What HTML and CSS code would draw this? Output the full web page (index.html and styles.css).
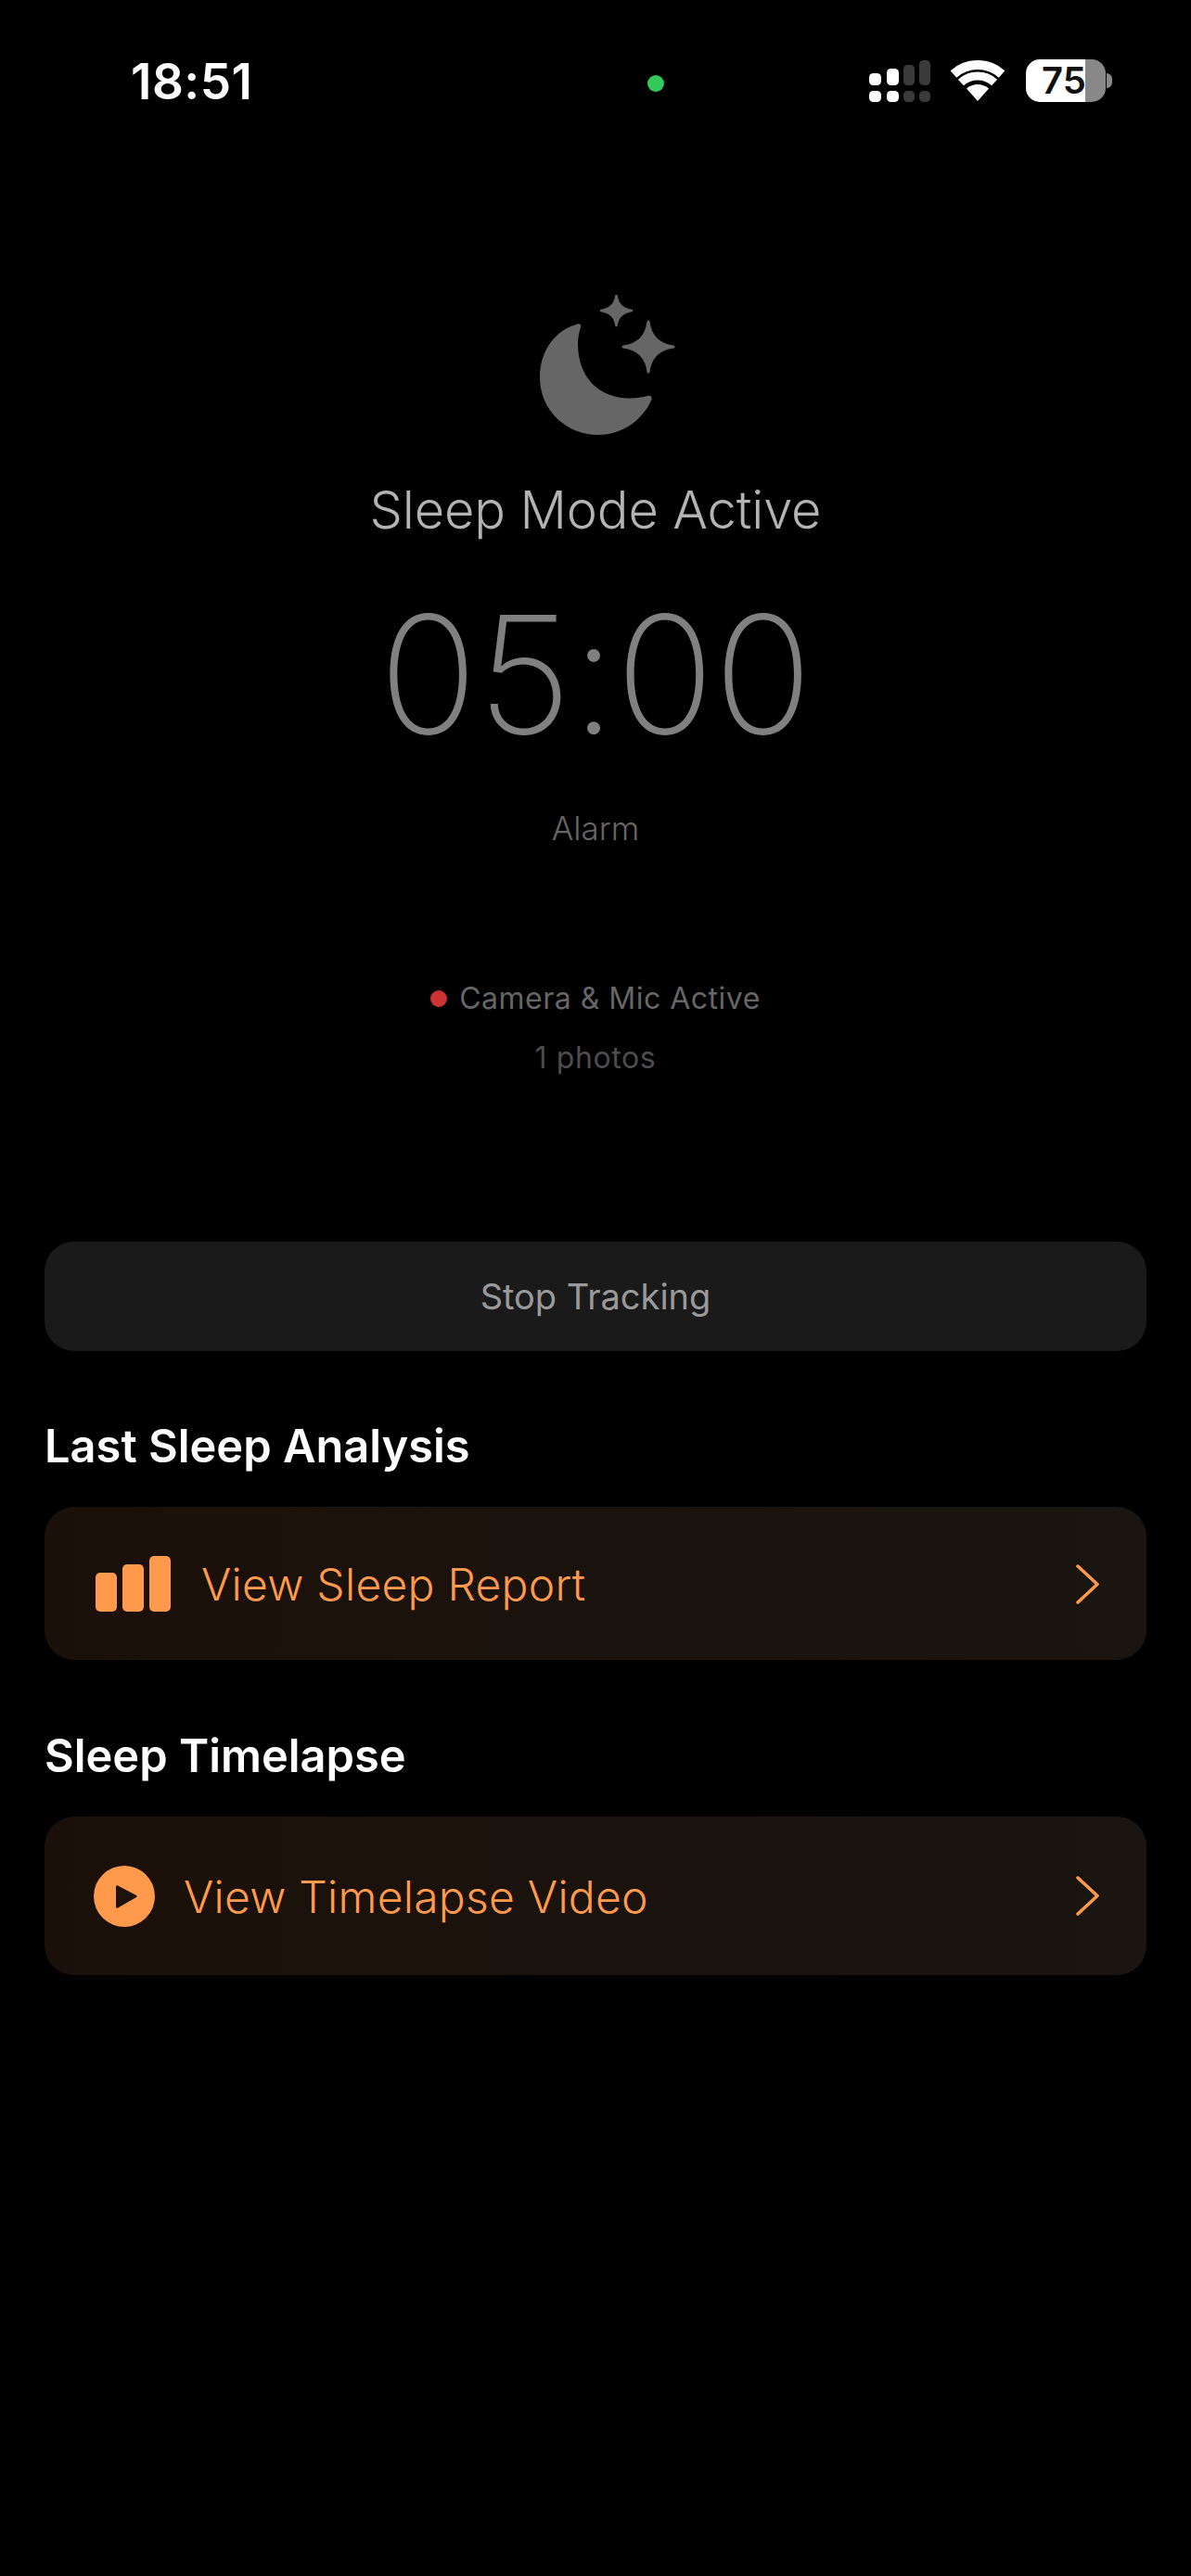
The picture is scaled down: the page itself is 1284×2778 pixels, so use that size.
FILE: index.html
```html
<!DOCTYPE html>
<html lang="en">
<head>
  <meta charset="UTF-8">
  <meta name="viewport" content="width=device-width, initial-scale=1.0">
  <title>Sleep Mode</title>
  <link rel="stylesheet" href="styles.css">
</head>
<body>
<div class="status-bar">
  <div class="clock">18:51</div>
  <div class="mic-dot"></div>
  <div class="status-icons">
    <svg class="signal" width="66" height="45" viewBox="0 0 66 45">
      <rect x="0" y="14" width="13" height="13" rx="4.5" fill="#fff"/>
      <rect x="0" y="33" width="13" height="12" rx="4.5" fill="#fff"/>
      <rect x="19" y="9" width="13" height="18" rx="4.5" fill="#fff"/>
      <rect x="19" y="33" width="13" height="12" rx="4.5" fill="#fff"/>
      <rect x="37" y="5" width="12" height="22" rx="4.5" fill="#3a3a3a"/>
      <rect x="37" y="33" width="12" height="12" rx="4.5" fill="#3a3a3a"/>
      <rect x="54" y="0" width="12" height="27" rx="4.5" fill="#3a3a3a"/>
      <rect x="54" y="33" width="12" height="12" rx="4.5" fill="#3a3a3a"/>
    </svg>
    <svg class="wifi" width="58" height="44" viewBox="0 0 58 44">
      <path d="M2.9 15 A39 39 0 0 1 55.1 15" fill="none" stroke="#fff" stroke-width="10"/>
      <path d="M10.9 24 A27 27 0 0 1 47.1 24" fill="none" stroke="#fff" stroke-width="9"/>
      <path d="M29 44 L17 30.6 A18 18 0 0 1 41 30.6 Z" fill="#fff"/>
    </svg>
    <div class="battery">
      <div class="battery-body">75</div>
      <div class="battery-nub"></div>
    </div>
  </div>
</div>

<div class="hero">
  <svg class="moon" width="146" height="151" viewBox="0 0 146 151">
    <path d="M40.5 31.5 C16 38 0 61 0 89 C0 124 28 151 63 151 C88 151 110 136 120 114 C122 110 119 108 116 109 C110 110.5 104 111.5 97 111.5 C63 111.5 41 88 41 53 C41 47 42 41 44 35 C45 32 43 30.5 40.5 31.5 Z" fill="#666"/>
    <path d="M117 29 Q120 53 144 56 Q120 59 117 83 Q114 59 90 56 Q114 53 117 29 Z" fill="#666" stroke="#666" stroke-width="3" stroke-linejoin="round"/>
    <path d="M82.5 1 Q84.5 15 99 17 Q84.5 19 82.5 33 Q80.5 19 66 17 Q80.5 15 82.5 1 Z" fill="#666" stroke="#666" stroke-width="2.5" stroke-linejoin="round"/>
  </svg>
  <div class="hero-title">Sleep Mode Active</div>
  <div class="alarm-time">05:00</div>
  <div class="alarm-label">Alarm</div>
  <div class="recording"><span class="rec-dot"></span>Camera &amp; Mic Active</div>
  <div class="photo-count">1 photos</div>
</div>

<div class="content">
  <div class="stop-btn">Stop Tracking</div>

  <h2 class="section-title first">Last Sleep Analysis</h2>
  <div class="link-card report-card">
    <svg class="card-icon" width="81" height="60" viewBox="0 0 81 60">
      <rect x="0" y="18" width="23" height="42" rx="5" fill="#ff9a4d"/>
      <rect x="29" y="9" width="23" height="51" rx="5" fill="#ff9a4d"/>
      <rect x="58" y="0" width="23" height="60" rx="5" fill="#ff9a4d"/>
    </svg>
    <span class="card-label">View Sleep Report</span>
    <svg class="chevron" width="25" height="43" viewBox="0 0 25 43">
      <polyline points="2,2 23,21.5 2,41" fill="none" stroke="#ff9a4d" stroke-width="3.5" stroke-linecap="round" stroke-linejoin="round"/>
    </svg>
  </div>

  <h2 class="section-title">Sleep Timelapse</h2>
  <div class="link-card video-card">
    <svg class="card-icon" width="66" height="66" viewBox="0 0 66 66">
      <circle cx="33" cy="33" r="33" fill="#ff9a4d"/>
      <path d="M26 21.5 L46 32 Q47.5 33 46 34 L26 45.5 Q24 46.5 24 44 L24 23 Q24 20.5 26 21.5 Z" fill="#1c120b"/>
    </svg>
    <span class="card-label">View Timelapse Video</span>
    <svg class="chevron" width="25" height="43" viewBox="0 0 25 43">
      <polyline points="2,2 23,21.5 2,41" fill="none" stroke="#ff9a4d" stroke-width="3.5" stroke-linecap="round" stroke-linejoin="round"/>
    </svg>
  </div>
</div>
</body>
</html>
```

FILE: styles.css
```css
body {
  margin: 0;
  width: 1284px;
  height: 2778px;
  overflow: hidden;
  background: #000;
  color: #fff;
  font-family: Inter, "Liberation Sans", sans-serif;
}
.status-bar {
  display: grid;
  grid-template-columns: 557px 18px 1fr;
  align-items: center;
  height: 46px;
  padding: 63px 85px 0 141px;
}
.clock {
  margin-top: 2px;
  font-size: 53px;
  line-height: 46px;
  font-weight: 600;
  letter-spacing: 0.5px;
}
.mic-dot {
  width: 18px;
  height: 18px;
  margin-top: 5px;
  border-radius: 50%;
  background: #34c759;
}
.status-icons {
  display: flex;
  justify-content: flex-end;
  align-items: center;
}
.signal {
  margin-right: 22px;
}
.wifi {
  margin-right: 23px;
}
.battery {
  display: flex;
  align-items: center;
}
.battery-body {
  width: 86px;
  height: 46px;
  border-radius: 15px;
  background: linear-gradient(90deg, #fff 64px, #888 64px);
  color: #111;
  font-size: 40px;
  font-weight: 600;
  line-height: 46px;
  padding-left: 17px;
  box-sizing: border-box;
}
.battery-nub {
  width: 6px;
  height: 16px;
  margin-left: 1px;
  border-radius: 0 8px 8px 0;
  background: #888;
}
.hero {
  display: flex;
  flex-direction: column;
  align-items: center;
  margin-top: 209px;
}
.moon {
  margin-left: 26px;
}
.hero-title {
  margin-top: 47px;
  font-size: 56px;
  line-height: 68px;
  font-weight: 350;
  letter-spacing: -0.15px;
  color: #b3b3b3;
}
.alarm-time {
  margin-top: 43px;
  font-size: 176px;
  line-height: 200px;
  font-weight: 200;
  letter-spacing: -0.5px;
  color: #808080;
}
.alarm-label {
  margin-top: 44px;
  font-size: 35px;
  line-height: 44px;
  font-weight: 300;
  color: #666;
}
.recording {
  display: flex;
  align-items: center;
  margin-top: 142px;
  font-size: 32px;
  line-height: 40px;
  letter-spacing: 0.5px;
  color: #666;
}
.rec-dot {
  width: 18px;
  height: 18px;
  margin-right: 13px;
  border-radius: 50%;
  background: #cc3333;
}
.photo-count {
  margin-top: 24px;
  font-size: 32px;
  line-height: 40px;
  letter-spacing: 0.6px;
  color: #4d4d4d;
}
.content {
  margin: 178px 48px 0;
}
.stop-btn {
  height: 118px;
  border-radius: 32px;
  background: #1a1a1a;
  color: #999;
  font-size: 38px;
  line-height: 118px;
  text-align: center;
}
.section-title {
  margin: 74px 0 35px;
  font-size: 48.8px;
  line-height: 60px;
  font-weight: 600;
}
.section-title.first {
  margin-top: 73px;
}
.link-card {
  display: flex;
  align-items: center;
  border-radius: 32px;
  background: linear-gradient(90deg, #1b1009, #1a1510);
  color: #ff9a4d;
  padding-right: 51px;
}
.report-card {
  height: 165px;
  padding-left: 55px;
}
.video-card {
  height: 171px;
  padding-left: 53px;
}
.card-label {
  padding-top: 2px;
  font-size: 48px;
  font-weight: 350;
  letter-spacing: 0.25px;
}
.report-card .card-label {
  margin-left: 33px;
}
.video-card .card-label {
  margin-left: 31px;
}
.chevron {
  margin-left: auto;
}
.report-card .chevron {
  margin-top: 2px;
}
```
